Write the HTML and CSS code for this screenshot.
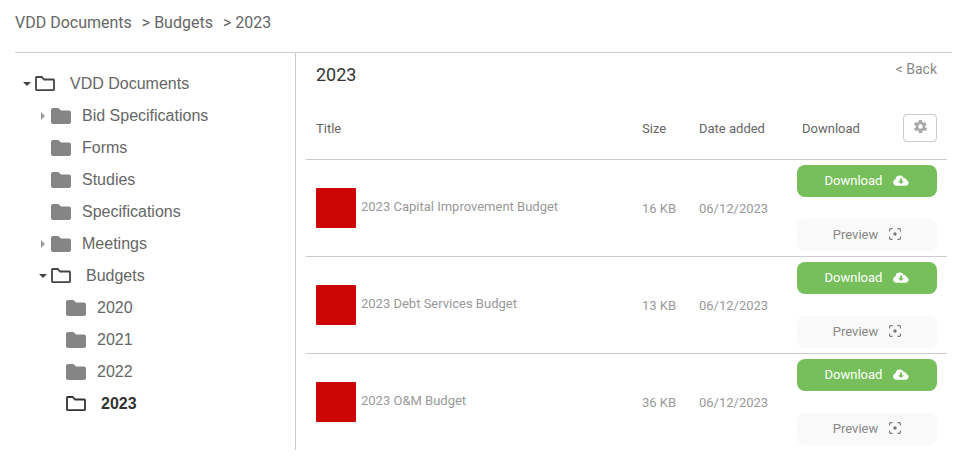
FILE: index.html
```html
<!DOCTYPE html>
<html lang="en">
<head>
<meta charset="UTF-8">
<meta name="viewport" content="width=device-width, initial-scale=1.0">
<title>VDD Documents - 2023</title>
<link rel="stylesheet" href="styles.css">
</head>
<body>

<svg class="defs" width="0" height="0">
  <symbol id="folder-fill" viewBox="0 0 20 16">
    <path d="M2 0h5.5l2.5 2.5h8a2 2 0 0 1 2 2V14a2 2 0 0 1-2 2H2a2 2 0 0 1-2-2V2a2 2 0 0 1 2-2z"/>
  </symbol>
  <symbol id="folder-open" viewBox="0 0 20 16">
    <path d="M1.7 1h5l2.4 2.5h9.2a.8.8 0 0 1 .7.8V13.200a1 1 0 0 1-1 1H2a1 1 0 0 1-1-1V1.700a.7.7 0 0 1 .7-.7z" fill="none" stroke="currentColor" stroke-width="1.800"/>
  </symbol>
  <symbol id="cloud" viewBox="0 0 18 12">
    <path fill-rule="evenodd" d="M4 12A4 4 0 0 1 3 4.200 4.500 4.500 0 0 1 7.500 0.500a5 5 0 0 1 4.600 2.800A3 3 0 0 1 15.300 5.300 3.500 3.500 0 0 1 14.500 12zM7.800 3.800v3H5.600L9 10l3.400-3.200h-2.200v-3z"/>
  </symbol>
</svg>

<!-- BREADCRUMB -->
<div class="crumbs">
  <span>VDD Documents</span>
  <span class="sep">&gt; Budgets</span>
  <span class="sep">&gt; 2023</span>
</div>

<div class="layout">

  <!-- TREE -->
  <div class="tree">
    <div class="node">
      <span class="caret down"></span>
      <svg class="ico dark"><use href="#folder-open"/></svg>
      <span class="label wide">VDD Documents</span>
    </div>
    <div class="node lvl1">
      <span class="caret right"></span>
      <svg class="ico"><use href="#folder-fill"/></svg>
      <span class="label">Bid Specifications</span>
    </div>
    <div class="node lvl1">
      <span class="caret"></span>
      <svg class="ico"><use href="#folder-fill"/></svg>
      <span class="label">Forms</span>
    </div>
    <div class="node lvl1">
      <span class="caret"></span>
      <svg class="ico"><use href="#folder-fill"/></svg>
      <span class="label">Studies</span>
    </div>
    <div class="node lvl1">
      <span class="caret"></span>
      <svg class="ico"><use href="#folder-fill"/></svg>
      <span class="label">Specifications</span>
    </div>
    <div class="node lvl1">
      <span class="caret right"></span>
      <svg class="ico"><use href="#folder-fill"/></svg>
      <span class="label">Meetings</span>
    </div>
    <div class="node lvl1">
      <span class="caret down"></span>
      <svg class="ico dark"><use href="#folder-open"/></svg>
      <span class="label wide">Budgets</span>
    </div>
    <div class="node lvl2">
      <span class="caret"></span>
      <svg class="ico"><use href="#folder-fill"/></svg>
      <span class="label">2020</span>
    </div>
    <div class="node lvl2">
      <span class="caret"></span>
      <svg class="ico"><use href="#folder-fill"/></svg>
      <span class="label">2021</span>
    </div>
    <div class="node lvl2">
      <span class="caret"></span>
      <svg class="ico"><use href="#folder-fill"/></svg>
      <span class="label">2022</span>
    </div>
    <div class="node lvl2 current">
      <span class="caret"></span>
      <svg class="ico dark"><use href="#folder-open"/></svg>
      <span class="label wide">2023</span>
    </div>
  </div>

  <!-- MAIN -->
  <div class="main">
    <div class="top">
      <h1>2023</h1>
      <a class="back" href="#">&lt; Back</a>
    </div>

    <div class="row head">
      <div class="c-title">Title</div>
      <div class="c-size">Size</div>
      <div class="c-date">Date added</div>
      <div class="c-dl head-dl">
        <span>Download</span>
        <button class="gear">
          <svg width="15" height="15" viewBox="0 0 24 24"><path d="M19.400 13a7.600 7.600 0 0 0 0-2l2.200-1.700a.6.6 0 0 0 .1-.7l-2.100-3.600a.6.6 0 0 0-.7-.2l-2.600 1a7.500 7.500 0 0 0-1.700-1l-.4-2.700a.5.500 0 0 0-.5-.5H9.700a.5.500 0 0 0-.5.500l-.4 2.700a7.500 7.500 0 0 0-1.700 1l-2.600-1a.6.6 0 0 0-.7.2L1.700 8.600a.6.6 0 0 0 .1.7L4.600 11a7.600 7.600 0 0 0 0 2l-2.800 1.700a.6.6 0 0 0-.1.7l2.100 3.600a.6.6 0 0 0 .7.2l2.600-1a7.500 7.500 0 0 0 1.700 1l.4 2.700a.5.500 0 0 0 .5.500h4.600a.5.500 0 0 0 .5-.500l.4-2.700a7.500 7.500 0 0 0 1.700-1l2.600 1a.6.6 0 0 0 .7-.2l2.100-3.600a.6.6 0 0 0-.1-.7zM12 15.500a3.500 3.500 0 1 1 0-7 3.500 3.500 0 0 1 0 7z"/></svg>
        </button>
      </div>
    </div>

    <div class="row doc">
      <div class="c-title name"><span class="thumb"></span><span class="doc-name">2023 Capital Improvement Budget</span></div>
      <div class="c-size">16 KB</div>
      <div class="c-date">06/12/2023</div>
      <div class="c-dl btns">
        <a class="btn green" href="#">Download <svg class="cloud"><use href="#cloud"/></svg></a>
        <a class="btn light" href="#">Preview <svg class="focus" viewBox="0 0 12 12"><path d="M.6 3.500V1.500a.9.9 0 0 1 .9-.9h2M8.500.6h2a.9.9 0 0 1 .9.9v2M11.400 8.500v2a.9.9 0 0 1-.9.9h-2M3.500 11.400h-2a.9.9 0 0 1-.9-.9v-2"/><circle cx="6" cy="6" r="1.700"/></svg></a>
      </div>
    </div>

    <div class="row doc">
      <div class="c-title name"><span class="thumb"></span><span class="doc-name">2023 Debt Services Budget</span></div>
      <div class="c-size">13 KB</div>
      <div class="c-date">06/12/2023</div>
      <div class="c-dl btns">
        <a class="btn green" href="#">Download <svg class="cloud"><use href="#cloud"/></svg></a>
        <a class="btn light" href="#">Preview <svg class="focus" viewBox="0 0 12 12"><path d="M.6 3.500V1.500a.9.9 0 0 1 .9-.9h2M8.500.6h2a.9.9 0 0 1 .9.9v2M11.400 8.500v2a.9.9 0 0 1-.9.9h-2M3.500 11.400h-2a.9.9 0 0 1-.9-.9v-2"/><circle cx="6" cy="6" r="1.700"/></svg></a>
      </div>
    </div>

    <div class="row doc last">
      <div class="c-title name"><span class="thumb"></span><span class="doc-name">2023 O&amp;M Budget</span></div>
      <div class="c-size">36 KB</div>
      <div class="c-date">06/12/2023</div>
      <div class="c-dl btns">
        <a class="btn green" href="#">Download <svg class="cloud"><use href="#cloud"/></svg></a>
        <a class="btn light" href="#">Preview <svg class="focus" viewBox="0 0 12 12"><path d="M.6 3.500V1.500a.9.9 0 0 1 .9-.9h2M8.500.6h2a.9.9 0 0 1 .9.9v2M11.400 8.500v2a.9.9 0 0 1-.9.9h-2M3.500 11.400h-2a.9.9 0 0 1-.9-.9v-2"/><circle cx="6" cy="6" r="1.700"/></svg></a>
      </div>
    </div>
  </div>

</div>

</body>
</html>
```

FILE: styles.css
```css
/* RESET */
*{
  margin:0;
  padding:0;
  box-sizing:border-box;
  font-family:Roboto, "Liberation Sans", sans-serif;
}

body{
  background:#fff;
  color:#666;
  overflow:hidden;
}

.defs{
  display:block;
  height:0;
}

/* BREADCRUMB */
.crumbs{
  height:53px;
  margin:0 17px 0 15px;
  padding-top:13px;
  font-size:16px;
  line-height:19px;
  color:#666;
  border-bottom:1px solid #ccc;
}

.sep{
  margin-left:6px;
}

.layout{
  display:flex;
  align-items:flex-start;
}

/* TREE */
.tree{
  width:296px;
  height:397px;
  padding-top:15px;
  border-right:1px solid #ccc;
}

.node{
  display:flex;
  align-items:center;
  height:32px;
  padding-left:22px;
  font-size:16px;
  color:#666;
}

.node span{
  font-family:"Liberation Sans", Arial, sans-serif;
}

.lvl1{
  padding-left:38px;
}

.lvl2{
  padding-left:53px;
}

.caret{
  width:13px;
  height:10px;
  flex:none;
  position:relative;
}

.caret.down::before{
  content:"";
  position:absolute;
  left:1px;
  top:3px;
  border-left:4.500px solid transparent;
  border-right:4.500px solid transparent;
  border-top:4.500px solid #444;
}

.caret.right::before{
  content:"";
  position:absolute;
  left:3px;
  top:1px;
  border-top:4px solid transparent;
  border-bottom:4px solid transparent;
  border-left:4.500px solid #999;
}

.ico{
  width:20px;
  height:16px;
  flex:none;
  fill:#858585;
  color:#444;
  overflow:visible;
}

.label{
  margin-left:11px;
}

.label.wide{
  margin-left:15px;
}

.current{
  color:#333;
}

.current .label{
  font-weight:bold;
}

.current .ico{
  color:#333;
}

/* MAIN */
.main{
  width:641px;
  margin-left:10px;
}

.top{
  display:flex;
  justify-content:space-between;
  height:57px;
  padding:11px 10px 0 10px;
}

.top h1{
  font-size:18px;
  line-height:22px;
  font-weight:normal;
  color:#333;
}

.back{
  font-size:14px;
  line-height:10px;
  color:#888;
  text-decoration:none;
}

/* ROWS */
.row{
  display:flex;
  font-size:13px;
  border-bottom:1px solid #ccc;
}

.row.last{
  border-bottom-color:transparent;
}

.head{
  height:50px;
  align-items:center;
  padding-bottom:12px;
  color:#666;
}

.doc{
  height:97px;
  color:#999;
  align-items:center;
}

.c-title{
  width:336px;
  padding-left:10px;
  flex:none;
}

.c-size{
  width:57px;
  flex:none;
}

.c-date{
  width:98px;
  flex:none;
}

.c-dl{
  width:140px;
  flex:none;
}

.head-dl{
  display:flex;
  align-items:center;
  justify-content:space-between;
  padding-left:5px;
}

.gear{
  width:34px;
  height:28px;
  display:flex;
  align-items:center;
  justify-content:center;
  padding-bottom:2px;
  margin-top:-2px;
  background:#fff;
  border:1px solid #ccc;
  border-radius:4px;
  fill:#aaa;
}

.name{
  display:flex;
  align-items:center;
  gap:5px;
}

.thumb{
  width:40px;
  height:40px;
  flex:none;
  background:#cc0505;
  border-radius:1px;
}

.doc-name{
  margin-top:-3px;
}

/* BUTTONS */
.btns{
  align-self:flex-start;
  padding-top:5px;
  display:flex;
  flex-direction:column;
  gap:22px;
}

.btn{
  height:32px;
  display:flex;
  align-items:center;
  justify-content:center;
  gap:8px;
  padding-bottom:2px;
  font-size:13px;
  text-decoration:none;
  border-radius:8px;
}

.btn.green{
  background:#76bf5b;
  color:#fff;
  gap:11px;
}

.btn.light{
  background:#f9f9f9;
  color:#888;
}

.cloud{
  width:16px;
  height:11px;
  fill:#fff;
}

.focus{
  width:12px;
  height:12px;
  margin-left:3px;
  fill:none;
  stroke:#777;
  stroke-width:1.100;
}

.focus circle{
  fill:#777;
  stroke:none;
}
```
